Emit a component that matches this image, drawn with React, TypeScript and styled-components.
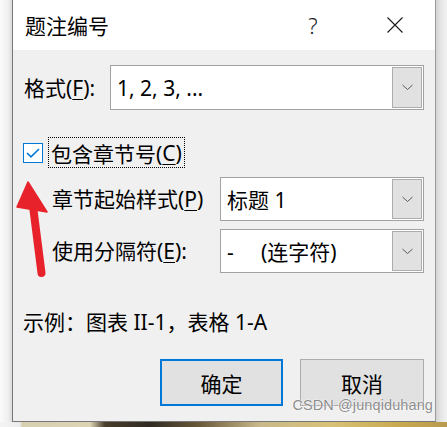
import React from "react";
import styled, { createGlobalStyle } from "styled-components";

const Global = createGlobalStyle`
  html, body { margin: 0; padding: 0; }
  body { width: 447px; height: 427px; overflow: hidden; }
  * { box-sizing: border-box; }
`;

const FONT = `"Noto Sans", "Noto Sans CJK SC", sans-serif`;

const Stage = styled.div`
  position: relative;
  width: 447px;
  height: 427px;
  overflow: hidden;
  font-family: ${FONT};
  color: #000;
  background:
    linear-gradient(to right, #f4f4f4 0px, #ececec 20px, #d6cfb0 22px, #ddd4b4 90px, #4a3e2c 105px, #2f2a22 150px, #6b5a3a 200px, #c9b98a 260px, #d8c277 330px, #c8a94e 400px, #b89a50 447px) bottom / 100% 5px no-repeat,
    linear-gradient(to right, #fbfbfb 0px, #f0f0f0 8px, #dcdcdc 12px, transparent 12px, transparent 436px, #d4d4d4 436px, #e6e6e6 441px, #f2f2f2 447px);
`;

const Dialog = styled.div`
  margin-left: 12px;
  width: 424px;
  height: 422px;
  border: 1px solid #767676;
  border-top: none;
  border-right-color: #9a9a9a;
  display: flex;
  flex-direction: column;
  background: #f0f0f0;
`;

const TitleBar = styled.div`
  height: 50px;
  flex: none;
  background: #fff;
  display: flex;
  align-items: center;
  padding-left: 12px;
`;

const Title = styled.div`
  flex: 1;
  font-size: 21px;
  line-height: 28px;
  font-family: "Noto Sans CJK SC", sans-serif;
`;

const CaptionButton = styled.div<{ $w: number; $mr?: number }>`
  width: ${(p) => p.$w}px;
  margin-right: ${(p) => p.$mr ?? 0}px;
  height: 50px;
  display: flex;
  align-items: center;
  justify-content: center;
  font-size: 22px;
  font-weight: 300;
  color: #1a1a1a;
`;

const Body = styled.div`
  flex: 1;
  display: flex;
  flex-direction: column;
  padding: 15px 11px 0 11px;
`;

const FieldRow = styled.div<{ $indent?: number; $mt?: number }>`
  display: flex;
  align-items: center;
  padding-left: ${(p) => p.$indent ?? 0}px;
  margin-top: ${(p) => p.$mt ?? 0}px;
`;

const Label = styled.div<{ $w: number }>`
  width: ${(p) => p.$w}px;
  flex: none;
  font-size: 21px;
  line-height: 28px;
  white-space: nowrap;
  u { text-decoration-thickness: 1px; text-underline-offset: 3px; }
`;

const Select = styled.div<{ $h: number }>`
  flex: 1;
  height: ${(p) => p.$h}px;
  border: 1px solid #a2a2a2;
  background: #fff;
  padding: 1px;
  display: flex;
  align-items: stretch;
`;

const SelectValue = styled.div`
  flex: 1;
  padding-left: 5px;
  display: flex;
  align-items: center;
  font-size: 21px;
  white-space: pre;
`;

const DropButton = styled.div`
  width: 30px;
  flex: none;
  border: 1px solid #adadad;
  background: #e1e1e1;
  display: flex;
  align-items: center;
  justify-content: center;
`;

const CheckRow = styled.div`
  display: flex;
  align-items: center;
  margin-top: 27px;
  margin-left: -1px;
`;

const CheckBox = styled.div`
  width: 20px;
  height: 20px;
  border: 1px solid #0078d7;
  background: #fff;
  display: flex;
  align-items: center;
  justify-content: center;
  flex: none;
`;

const FocusLabel = styled.div`
  margin-left: 5px;
  height: 31px;
  padding: 0 2px 0 2px;
  border: 1px dotted #000;
  display: flex;
  align-items: center;
  font-size: 21px;
  u { text-decoration-thickness: 1px; text-underline-offset: 3px; }
`;

const Example = styled.div`
  margin-top: 35px;
  margin-left: -1px;
  font-size: 21px;
  line-height: 28px;
`;

const ButtonRow = styled.div`
  margin-top: 23px;
  display: flex;
  justify-content: flex-end;
  gap: 17px;
`;

const Button = styled.div<{ $focused?: boolean; $w: number }>`
  width: ${(p) => p.$w}px;
  height: 47px;
  background: #e1e1e1;
  border: ${(p) => (p.$focused ? "2px solid #0078d7" : "1px solid #adadad")};
  display: flex;
  align-items: center;
  justify-content: center;
  font-size: 21px;
`;

const Overlay = styled.svg`
  position: absolute;
  left: 0;
  top: 0;
  pointer-events: none;
`;

const Watermark = styled.div`
  position: absolute;
  right: 14px;
  top: 397px;
  font-family: "Liberation Sans", "Noto Sans", sans-serif;
  font-size: 14.5px;
  color: rgba(125, 125, 125, 0.9);
  text-shadow: 0 0 1px #fff, 0 0 2px #fff;
  letter-spacing: 0.1px;
`;

const Chevron = () => (
  <svg width="11" height="7" viewBox="0 0 11 7">
    <path d="M0.5 1 L5.5 5.5 L10.5 1" fill="none" stroke="#5a5a5a" strokeWidth="1" />
  </svg>
);

export default function App() {
  return (
    <Stage>
      <Global />
      <Dialog>
        <TitleBar>
          <Title>题注编号</Title>
          <CaptionButton $w={60} $mr={12}>?</CaptionButton>
          <CaptionButton $w={80}>
            <svg width="16" height="16" viewBox="0 0 16 16">
              <path d="M0.5 0.5 L15.5 15.5 M15.5 0.5 L0.5 15.5" stroke="#1a1a1a" strokeWidth="1.1" />
            </svg>
          </CaptionButton>
        </TitleBar>
        <Body>
          <FieldRow>
            <Label $w={86}>
              格式(<u>F</u>):
            </Label>
            <Select $h={45}>
              <SelectValue>1, 2, 3, ...</SelectValue>
              <DropButton>
                <Chevron />
              </DropButton>
            </Select>
          </FieldRow>
          <CheckRow>
            <CheckBox>
              <svg width="16" height="12" viewBox="0 0 16 12">
                <path d="M2 6 L6 9.8 L14 2" fill="none" stroke="#0078d7" strokeWidth="1.6" />
              </svg>
            </CheckBox>
            <FocusLabel>
              包含章节号(<u>C</u>)
            </FocusLabel>
          </CheckRow>
          <FieldRow $indent={28} $mt={9}>
            <Label $w={168}>
              章节起始样式(<u>P</u>)
            </Label>
            <Select $h={44}>
              <SelectValue>标题 1</SelectValue>
              <DropButton>
                <Chevron />
              </DropButton>
            </Select>
          </FieldRow>
          <FieldRow $indent={28} $mt={8}>
            <Label $w={168}>
              使用分隔符(<u>E</u>):
            </Label>
            <Select $h={44}>
              <SelectValue>{"-     (连字符)"}</SelectValue>
              <DropButton>
                <Chevron />
              </DropButton>
            </Select>
          </FieldRow>
          <Example>示例：图表 II-1，表格 1-A</Example>
          <ButtonRow>
            <Button $focused $w={123}>确定</Button>
            <Button $w={124}>取消</Button>
          </ButtonRow>
        </Body>
      </Dialog>
      <Overlay width="447" height="427" viewBox="0 0 447 427">
        <line x1="33" y1="206" x2="41.5" y2="273" stroke="#e8222b" strokeWidth="8" strokeLinecap="round" />
        <polygon points="28,182 17,207 47,212" fill="#e8222b" strokeLinejoin="round" stroke="#e8222b" strokeWidth="1.5" />
      </Overlay>
      <Watermark>CSDN @junqiduhang</Watermark>
    </Stage>
  );
}
